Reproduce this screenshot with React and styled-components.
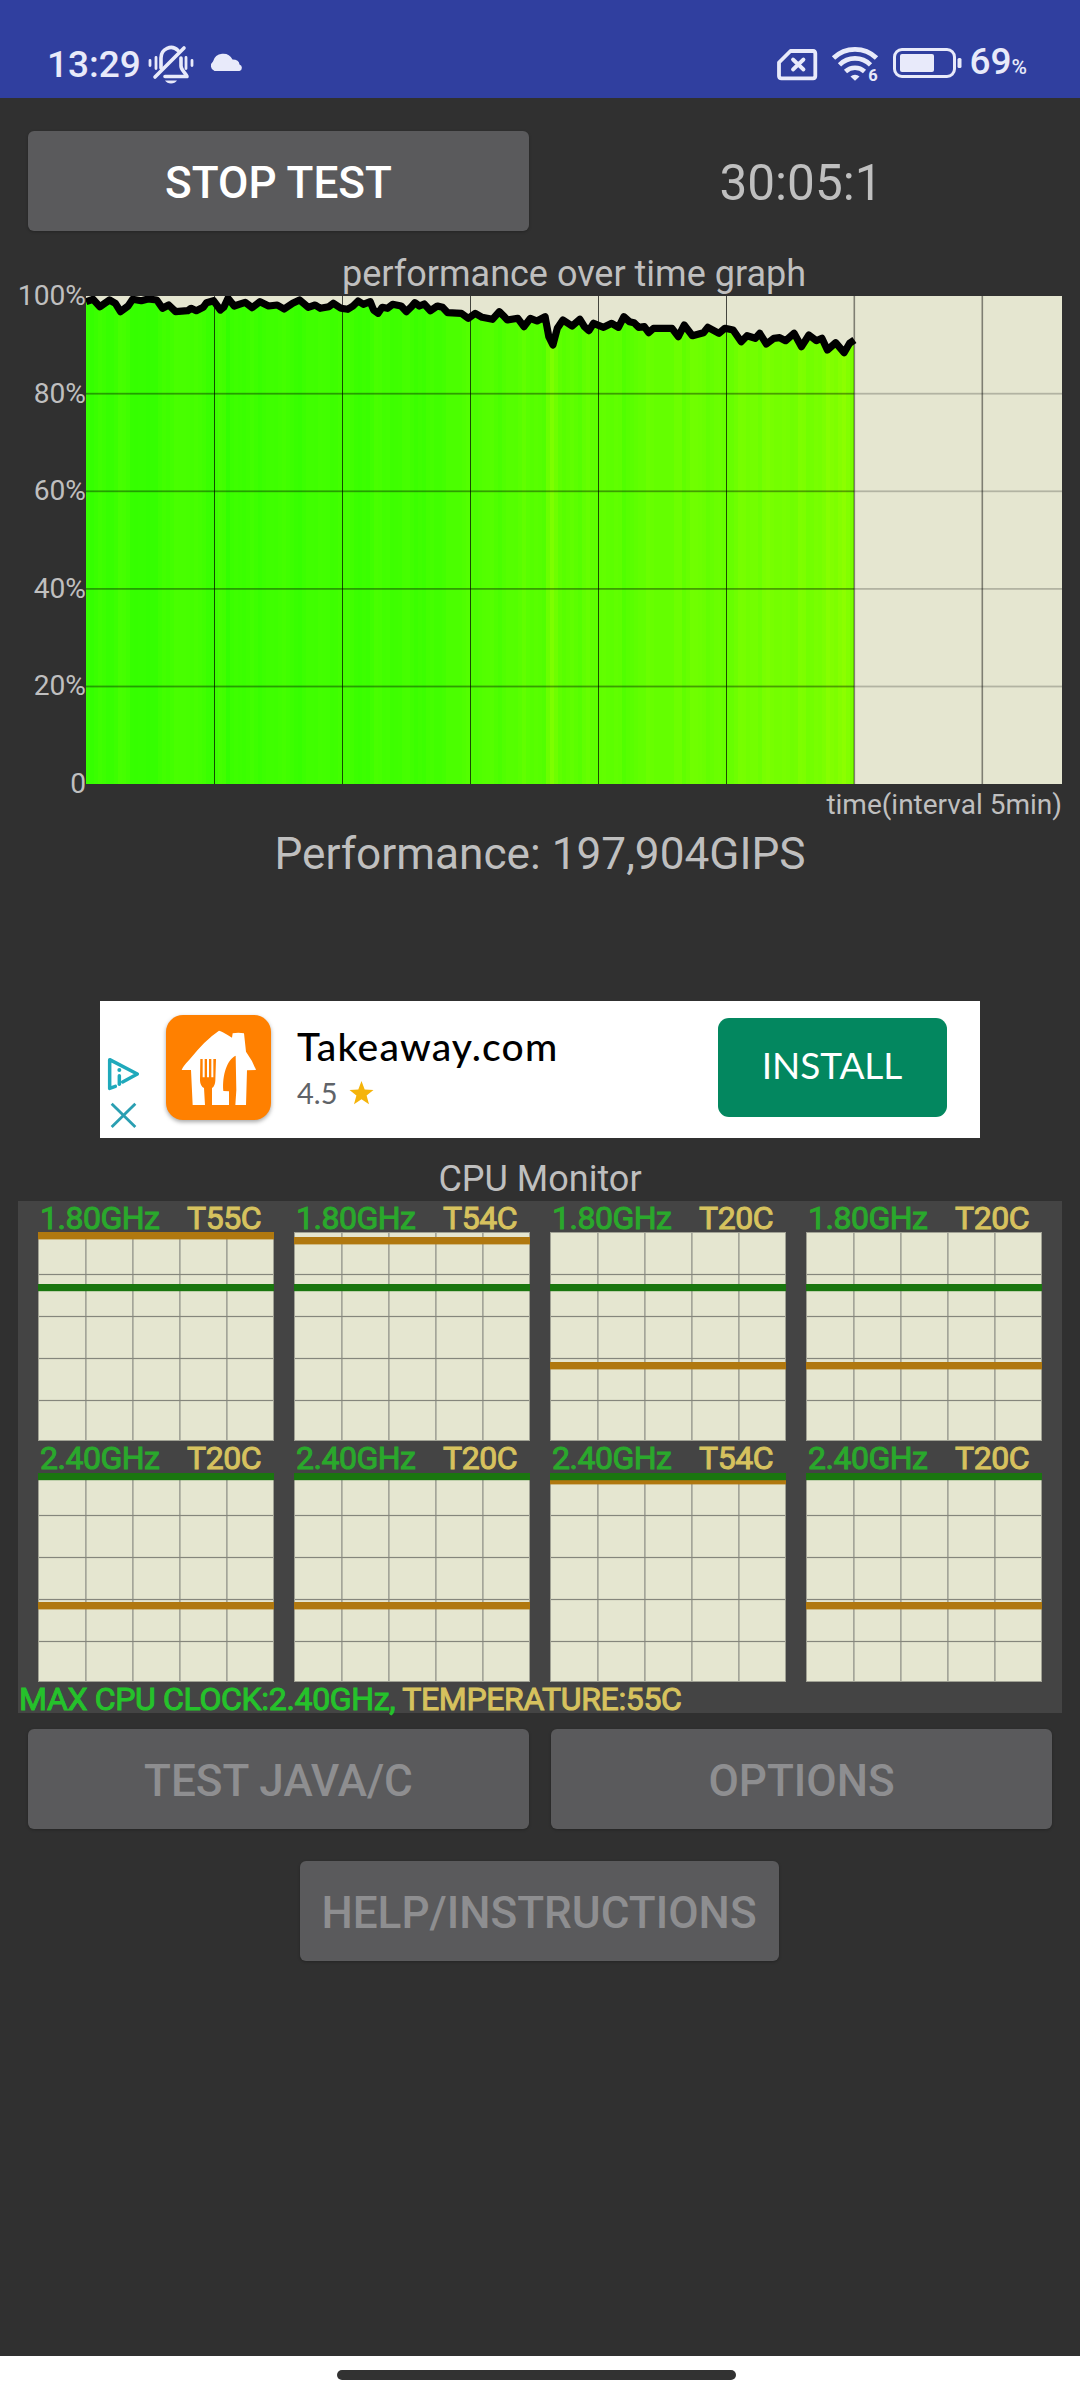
import React from "react";
import styled, { createGlobalStyle } from "styled-components";

const GlobalStyle = createGlobalStyle`
  * { box-sizing: border-box; }
  body { margin: 0; background: #303030; }
  svg { display: block; flex: none; }
`;

const Screen = styled.div`
  width: 1080px;
  height: 2400px;
  display: flex;
  flex-direction: column;
  background: #303030;
  color: #bfbfbf;
  font-family: Roboto, "Liberation Sans", sans-serif;
  overflow: hidden;
`;

const StatusBar = styled.header`
  height: 98px;
  display: flex;
  justify-content: space-between;
  padding: 28px 53px 0 47px;
  background: #303f9f;
  color: #e8eafa;
`;

const StatusGroup = styled.div`
  display: flex;
  align-items: center;
  height: 72px;
`;

const StatusText = styled.span`
  font-size: 37px;
  font-weight: 500;
  line-height: 72px;
  padding-top: 1px;
  width: ${(p) => (p.$width ? `${p.$width}px` : "auto")};
  white-space: nowrap;
`;

const Percent = styled.small`
  font-size: 21px;
  font-weight: 500;
`;

const Content = styled.main`
  flex: 1;
  display: flex;
  flex-direction: column;
  padding: 33px 18px 0;
`;

const ButtonRow = styled.div`
  display: flex;
  justify-content: ${(p) => (p.$center ? "center" : "flex-start")};
  gap: 22px;
  padding: 0 ${(p) => (p.$center ? 12 : 10)}px 0 10px;
  margin-top: ${(p) => p.$top || 0}px;
`;

const Button = styled.button`
  width: ${(p) => p.$width || 501}px;
  height: 100px;
  padding: 4px 0 0;
  border: 0;
  border-radius: 6px;
  background: #5a5a5c;
  box-shadow: 0 1px 3px rgba(0, 0, 0, 0.25);
  color: ${(p) => (p.disabled ? "#8e8e90" : "#ffffff")};
  font: 500 44.1px/96px Roboto, sans-serif;
  white-space: nowrap;
`;

const Timer = styled.div`
  width: 501px;
  padding: 2px 1px 0 0;
  font-size: 49.5px;
  line-height: 100px;
  height: 100px;
  text-align: center;
`;

const Caption = styled.h2`
  margin: 0;
  padding-top: ${(p) => p.$padTop || 0}px;
  height: ${(p) => p.$height}px;
  line-height: ${(p) => p.$height - (p.$padTop || 0)}px;
  font-size: ${(p) => p.$size || 36}px;
  font-weight: 400;
  text-align: center;
`;

const GraphTitle = styled(Caption)`
  margin-top: 21px;
  padding-left: 68px;
`;

const GraphRow = styled.div`
  display: flex;
  height: 488px;
`;

const Axis = styled.div`
  width: 68px;
  height: 516px;
  margin: -14px 0;
  display: flex;
  flex-direction: column;
  justify-content: space-between;
  align-items: flex-end;
`;

const AxisLabel = styled.span`
  font-size: 28.2px;
  line-height: 28px;
`;

const TimeLabel = styled.div`
  height: 41px;
  line-height: 41px;
  font-size: 28px;
  text-align: right;
`;

const Ad = styled.aside`
  width: 880px;
  height: 137px;
  margin: 118px 0 0 82px;
  display: flex;
  background: #fff;
`;

const AdMarks = styled.div`
  width: 66px;
  display: flex;
  flex-direction: column;
  gap: 10px;
  padding: 56px 0 0 7px;
`;

const AppIcon = styled.div`
  width: 105px;
  height: 105px;
  margin-top: 14px;
  border-radius: 17px;
  background: #ff8000;
  box-shadow: 0 2px 4px rgba(0, 0, 0, 0.35);
`;

const AdBody = styled.div`
  flex: 1;
  padding: 22px 0 0 26px;
`;

const AdTitle = styled.div`
  color: #000;
  font-family: Lato, sans-serif;
  font-weight: 500;
  font-size: 39px;
  line-height: 46px;
  letter-spacing: 1.15px;
  white-space: nowrap;
`;

const Rating = styled.div`
  display: flex;
  align-items: center;
  gap: 12px;
  height: 47px;
  color: #5f6368;
  font-family: Lato, sans-serif;
  font-size: 29px;
  line-height: 47px;
`;

const Install = styled.button`
  width: 229px;
  height: 99px;
  margin: 17px 33px 0 0;
  padding: 0 1px 5px 0;
  border: 0;
  border-radius: 11px;
  background: #03875f;
  color: #fff;
  font: 400 37px/94px Lato, sans-serif;
  letter-spacing: -0.1px;
`;

const Monitor = styled.section`
  height: 512px;
  background: #444444;
`;

const CoreRow = styled.div`
  display: flex;
  gap: 20px;
  padding-left: 20px;
`;

const Core = styled.div`
  width: 236px;
`;

const CoreLabel = styled.div`
  height: ${(p) => p.$height}px;
  padding: 2px 13px 0 2px;
  display: flex;
  justify-content: space-between;
  font-size: 32px;
  line-height: 31px;
  letter-spacing: -0.5px;
`;

const Freq = styled.span`
  color: ${(p) => (p.$bright ? "#25c22b" : "#2aa82c")};
  -webkit-text-stroke: 1px ${(p) => (p.$bright ? "#25c22b" : "#2aa82c")};
`;

const Temp = styled.span`
  color: #d6c25e;
  -webkit-text-stroke: 1px #d6c25e;
`;

const Summary = styled.div`
  height: 31px;
  padding: 2px 0 0 1px;
  font-size: 32px;
  line-height: 31px;
  letter-spacing: -0.34px;
  white-space: nowrap;
`;

const NavBar = styled.footer`
  height: 44px;
  background: #fff;
  display: flex;
  justify-content: center;
  padding-top: 14px;
`;

const Pill = styled.div`
  width: 399px;
  height: 10px;
  border-radius: 5px;
  background: #323232;
  margin-right: 7px;
`;

/* samples: distance from the left edge, drop below the 100% line */
const firstHalf = [
  [250, 95], [270, 88], [290, 110], [318, 90], [335, 100], [350, 125], [372, 108], [385, 88], [410, 92],
  [430, 87], [455, 90], [472, 115], [490, 105], [510, 125], [545, 122], [555, 115], [570, 122], [590, 112],
  [600, 98], [620, 92], [640, 120], [650, 112], [662, 85], [680, 108], [712, 97], [732, 113], [755, 95],
  [780, 108], [805, 105], [825, 117], [850, 100], [870, 90], [895, 112], [915, 105], [930, 115], [955, 110],
  [968, 100], [990, 115], [1010, 118], [1025, 108], [1040, 93], [1055, 103], [1075, 95], [1085, 120],
  [1098, 130], [1110, 112], [1125, 115], [1140, 103], [1165, 108], [1180, 125], [1195, 110], [1205, 98],
  [1218, 108], [1232, 102], [1250, 122], [1270, 108], [1285, 112], [1300, 128], [1340, 130], [1360, 145],
  [1380, 130], [1400, 142], [1430, 148], [1450, 125],
].map(([x, y]) => [x / 2.904 - 86, y / 3 - 26]);

const secondHalf = [
  [8, 136], [20, 150], [48, 145], [65, 170], [82, 145], [100, 153], [122, 140], [132, 200], [143, 225], [155, 175],
  [170, 150], [195, 168], [216, 148], [228, 170], [240, 182], [253, 160], [280, 172], [302, 160], [320, 172],
  [335, 140], [350, 155], [362, 158], [375, 172], [390, 170], [402, 188], [415, 175], [465, 175], [482, 200],
  [498, 165], [520, 197], [550, 188], [562, 172], [592, 190], [608, 175], [630, 180], [652, 215], [668, 197],
  [690, 205], [702, 190], [720, 222], [740, 205], [756, 203], [772, 212], [795, 190], [815, 230], [835, 195],
  [855, 212], [870, 205], [885, 240], [907, 218], [930, 248], [945, 220], [958, 210],
].map(([x, y]) => [414 + x / 2.703, y / 3 - 26]);

const samples = [...firstHalf, ...secondHalf];

const dropAt = (x) => {
  const i = samples.findIndex((s) => s[0] >= x);
  if (i <= 0) return samples[i === 0 ? 0 : samples.length - 1][1];
  const [x0, y0] = samples[i - 1];
  const [x1, y1] = samples[i];
  return y0 + ((x - x0) / (x1 - x0)) * (y1 - y0);
};

const STRIP = 4;
const strips = Array.from({ length: 192 }, (_, i) => {
  const x = i * STRIP;
  const drop = dropAt(x + STRIP / 2);
  return { x, drop, red: Math.round(47 + drop * 1.65) };
});

function PerformanceChart() {
  return (
    <svg width="976" height="488" viewBox="0 0 976 488">
      <rect width="976" height="488" fill="#e5e6d0" />
      <g shapeRendering="crispEdges">
        {strips.map((s) => (
          <rect key={s.x} x={s.x} y={s.drop} width={STRIP} height={488 - s.drop} fill={`rgb(${s.red},255,0)`} />
        ))}
      </g>
      {[1, 2, 3, 4].map((n) => (
        <g key={n} fill="#000">
          <rect x="0" y={n * 97.6 - 0.8} width="768" height="1.8" opacity="0.38" />
          <rect x="768" y={n * 97.6 - 0.8} width="208" height="1.8" opacity="0.22" />
        </g>
      ))}
      {[1, 2, 3, 4, 5, 6, 7].map((n) => (
        <rect key={n} x={n * 128 - (n > 5 ? 0.5 : 0)} y="0" width={n > 5 ? 1.6 : 1} height="488" fill="#000" opacity={n > 5 ? 0.45 : 0.7} />
      ))}
      <polyline points={samples.map((s) => s.map((v) => v.toFixed(1)).join(",")).join(" ")} fill="none" stroke="#000" strokeWidth="7.2" strokeLinejoin="round" />
    </svg>
  );
}

function CoreChart({ green, orange }) {
  return (
    <svg width="236" height="209" viewBox="0 0 236 209">
      <rect width="236" height="209" fill="#e5e6d0" />
      {[48, 95, 142, 189].map((x) => (
        <rect key={x} x={x - 1} width="1.7" height="209" fill="#a4a599" />
      ))}
      {[42, 84, 126, 168].map((y) => (
        <rect key={y} y={y - 0.1} width="236" height="1.2" fill="#85867c" />
      ))}
      <rect x="0.5" y="0.5" width="235" height="208" fill="none" stroke="#a0a194" strokeWidth="1" />
      <rect y={orange} width="236" height="7.4" fill="#b0780f" />
      <rect y={green} width="236" height="7.2" fill="#1a760f" />
    </svg>
  );
}

const coreRows = [
  { label: 31, freq: "1.80GHz", green: 52, temps: [[55, 0], [54, 5], [20, 130], [20, 130]] },
  { label: 32, freq: "2.40GHz", green: 0, temps: [[20, 129], [20, 129], [54, 4], [20, 129]] },
];

function MutedBell() {
  return (
    <svg width="46" height="40" viewBox="148 43 46 40" fill="none" stroke="currentColor" strokeWidth="3.6" strokeLinecap="round">
      <path d="M161 67V57A10 10.5 0 0 1 178 49.5" />
      <path d="M181 57V65C181 69 185 71 187 75.5H165" strokeLinejoin="round" />
      <path d="M184 47 155 76" />
      <path d="M165 79.5H177Q175 82.5 171 82.5T165 79.5Z" fill="currentColor" stroke="none" />
      <path d="M150 59.5V64.5M156 56.5V67.5M186 56.5V67.5M192 59.5V64.5" strokeWidth="2.8" />
    </svg>
  );
}

const CloudIcon = styled.svg`
  margin: 0 0 4px 15px;
`;

function Cloud() {
  return (
    <CloudIcon width="34" height="20" viewBox="209 52 34 20" fill="currentColor">
      <path d="M214.5 71A5.5 5.5 0 0 1 213 61.5A10.5 10.5 0 0 1 232.5 59.5Q239 59.5 239.5 64.5A3.4 3.4 0 0 1 239.5 71Z" />
    </CloudIcon>
  );
}

function StatusIcons() {
  return (
    <svg width="194" height="40" viewBox="775 44 194 40" fill="none" stroke="currentColor">
      <path d="M790.5 51H813A2.5 2.5 0 0 1 815.3 53.3V76A2.5 2.5 0 0 1 813 78.3H781.5A2.5 2.5 0 0 1 779 76V62.5Z" strokeWidth="3.8" strokeLinejoin="round" />
      <path d="M793 59.5 803.5 69.5M803.5 59.5 793 69.5" strokeWidth="3.8" strokeLinecap="round" />
      <path d="M833.5 58A31 31 0 0 1 876.5 58" strokeWidth="4.8" />
      <path d="M839.5 64.8A22 22 0 0 1 870.5 64.8" strokeWidth="4.6" />
      <path d="M845.5 71.5A14 14 0 0 1 864.5 71.5" strokeWidth="4.6" />
      <path d="M850.5 76.5A6.5 6.5 0 0 1 859.5 76.5L855 80.8Z" fill="currentColor" stroke="none" />
      <text x="868.3" y="80.5" fontSize="16.5" fontWeight="700" fill="currentColor" stroke="none">6</text>
      <rect x="894.5" y="49.5" width="60" height="27" rx="7.5" strokeWidth="3" />
      <rect x="900" y="54" width="34" height="18" rx="2" fill="currentColor" stroke="none" />
      <rect x="957.5" y="58" width="4" height="10" rx="1.5" fill="currentColor" stroke="none" />
    </svg>
  );
}

function AdChoices() {
  return (
    <svg width="33" height="35" viewBox="51 202 99 105" fill="none" stroke="#1fa9bb" strokeWidth="10.5" strokeLinecap="round" strokeLinejoin="round">
      <path d="M76 290 59 296V210L142 253 98 277" />
      <path d="M88 258V284" />
      <circle cx="88" cy="241" r="6" fill="#1fa9bb" stroke="none" />
    </svg>
  );
}

function CloseMark() {
  return (
    <svg width="33" height="27" viewBox="51 336 99 81" fill="none" stroke="#2a9fb2" strokeWidth="8.5">
      <path d="M65 341 136 411M136 341 65 411" />
    </svg>
  );
}

function HouseLogo() {
  return (
    <svg width="105" height="105" viewBox="228 75 315 315">
      <path fill="#fff" d="M387 122Q393 122 426 143L428 130Q445 126 462 130L468 185Q488 212 498 240L471 241 468 345H308L303 240H275Q278 230 300 207Q345 150 387 122Z" />
      <path fill="#ff8000" d="M437 197C412 208 396 255 400 303L417 304V346H436L439 300Z" />
      <path fill="#ff8000" d="M331 207H338V262H344V207H351V262H357V207H364V262H370V207H378L376 272Q375 288 366 294V346H345L342 294Q331 288 330 272Z" />
    </svg>
  );
}

function Star() {
  return (
    <svg width="25" height="24" viewBox="0 0 25 24">
      <path fill="#f5b40a" d="M12.5 0 15.7 8.6 24.5 9 17.6 14.5 20 23.3 12.5 18.3 5 23.3 7.4 14.5 .5 9 9.3 8.6Z" />
    </svg>
  );
}

export default function App() {
  return (
    <>
      <GlobalStyle />
      <Screen>
        <StatusBar>
          <StatusGroup>
            <StatusText $width={101}>13:29</StatusText>
            <MutedBell />
            <Cloud />
          </StatusGroup>
          <StatusGroup>
            <StatusIcons />
            <StatusText>
              69<Percent>%</Percent>
            </StatusText>
          </StatusGroup>
        </StatusBar>
        <Content>
          <ButtonRow>
            <Button>STOP TEST</Button>
            <Timer>30:05:1</Timer>
          </ButtonRow>
          <GraphTitle $height={44}>performance over time graph</GraphTitle>
          <GraphRow>
            <Axis>
              {["100%", "80%", "60%", "40%", "20%", "0"].map((t) => (
                <AxisLabel key={t}>{t}</AxisLabel>
              ))}
            </Axis>
            <PerformanceChart />
          </GraphRow>
          <TimeLabel>time(interval 5min)</TimeLabel>
          <Caption $height={58} $size={44.2}>Performance: 197,904GIPS</Caption>
          <Ad>
            <AdMarks>
              <AdChoices />
              <CloseMark />
            </AdMarks>
            <AppIcon>
              <HouseLogo />
            </AppIcon>
            <AdBody>
              <AdTitle>Takeaway.com</AdTitle>
              <Rating>
                4.5
                <Star />
              </Rating>
            </AdBody>
            <Install>INSTALL</Install>
          </Ad>
          <Caption $height={63} $padTop={20}>CPU Monitor</Caption>
          <Monitor>
            {coreRows.map((row) => (
              <CoreRow key={row.freq}>
                {row.temps.map(([temp, y], i) => (
                  <Core key={i}>
                    <CoreLabel $height={row.label}>
                      <Freq>{row.freq}</Freq>
                      <Temp>T{temp}C</Temp>
                    </CoreLabel>
                    <CoreChart green={row.green} orange={y} />
                  </Core>
                ))}
              </CoreRow>
            ))}
            <Summary>
              <Freq $bright>MAX CPU CLOCK:2.40GHz, </Freq>
              <Temp>TEMPERATURE:55C</Temp>
            </Summary>
          </Monitor>
          <ButtonRow $top={16}>
            <Button disabled>TEST JAVA/C</Button>
            <Button disabled>OPTIONS</Button>
          </ButtonRow>
          <ButtonRow $top={32} $center>
            <Button disabled $width={479}>HELP/INSTRUCTIONS</Button>
          </ButtonRow>
        </Content>
        <NavBar>
          <Pill />
        </NavBar>
      </Screen>
    </>
  );
}
